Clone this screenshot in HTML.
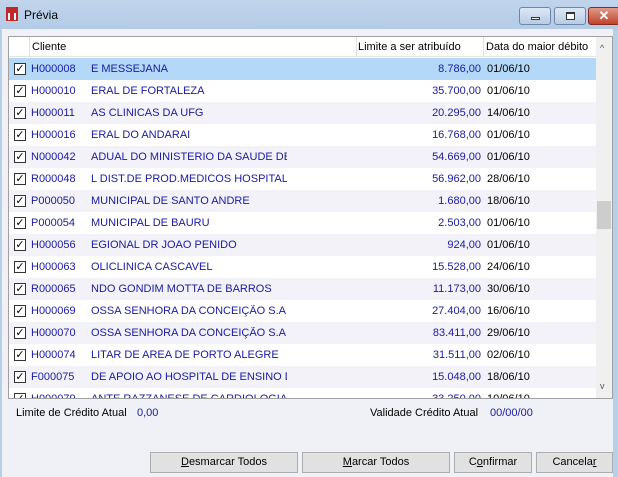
<!DOCTYPE html>
<html><head><style>
*{margin:0;padding:0;box-sizing:border-box}
body{width:618px;height:477px;overflow:hidden;font-family:"Liberation Sans",sans-serif;font-size:11px;background:#f0f0f7;position:relative}
.title{position:absolute;left:0;top:0;width:618px;height:29px;background:linear-gradient(#c0d4ec,#b4cbe6)}
.lb{position:absolute;left:0;top:29px;width:2px;height:448px;background:#b8cfea}
.rb{position:absolute;right:0;top:29px;width:5px;height:448px;background:#b8cfea}
.tb{position:absolute;top:7px;height:18px;border:1px solid #6e87a8;border-radius:3px;background:linear-gradient(#dce8f6,#b8cce4)}
.grid{position:absolute;left:8px;top:36px;width:605px;height:363px;border:1px solid #a0a0a0;background:#fff;overflow:hidden}
.hdr{position:absolute;left:0;top:0;width:587px;height:20px;background:#fff;border-bottom:1px solid #e4e4e4}
.hdr span{position:absolute;top:4px;color:#000}
.hsep{position:absolute;top:0;width:1px;height:20px;background:#e0e0e0}
.row{position:absolute;left:0;width:587px;height:22px}
.row span{position:absolute;top:5px;color:#1a1aa0;white-space:nowrap}
.cb{position:absolute;left:5px;top:5px;width:12px;height:12px;border:1px solid #333;background:#fff;font-size:11px;line-height:10px;text-align:center;color:#000}
.sb{position:absolute;left:587px;top:0;width:16px;height:361px;background:#f0f0f0}
.btn{position:absolute;top:452px;height:21px;border:1px solid #adadad;background:#e1e1e1;text-align:center;line-height:19px;font-size:11px;color:#000}
</style></head><body>
<div class="title"></div>
<div style="position:absolute;left:6px;top:7px;width:12px;height:14px;background:#c0282a"></div>
<div style="position:absolute;left:8px;top:13px;width:8px;height:7px;border-left:2px solid #fff;border-right:2px solid #fff"></div>
<div style="position:absolute;left:24px;top:8px;font-size:12px;color:#000">Prévia</div>
<div class="tb" style="left:519px;width:32px"><div style="position:absolute;left:11px;top:9px;width:9px;height:3px;border:1px solid #333;background:#fff"></div></div>
<div class="tb" style="left:554px;width:32px"><div style="position:absolute;left:11px;top:4px;width:9px;height:8px;border:1px solid #333;border-top-width:2px;background:#fff"></div></div>
<div class="tb" style="left:588px;width:32px;background:linear-gradient(#e09a88,#c0442c);border-color:#8a2a1c;color:#fff;font-weight:bold;font-size:13px;text-align:center;line-height:15px">✕</div>
<div class="lb"></div><div class="rb"></div>
<div class="grid">
<div class="hdr"><span style="left:23px">Cliente</span><span style="left:349px">Limite a ser atribuído</span><span style="left:477px">Data do maior débito</span>
<div class="hsep" style="left:20px"></div><div class="hsep" style="left:347px"></div><div class="hsep" style="left:474px"></div></div>
<div id="rows"></div>
<div class="sb"><div style="position:absolute;left:4px;top:6px;font-size:9px;color:#555">^</div>
<div style="position:absolute;left:1px;top:164px;width:14px;height:28px;background:#cdcdcd"></div>
<div style="position:absolute;left:4px;top:344px;font-size:9px;color:#555">v</div></div>
</div>
<div style="position:absolute;left:16px;top:407px;color:#000">Limite de Crédito Atual</div>
<div style="position:absolute;left:137px;top:407px;color:#1a1aa0">0,00</div>
<div style="position:absolute;left:370px;top:407px;color:#000">Validade Crédito Atual</div>
<div style="position:absolute;left:490px;top:407px;color:#1a1aa0">00/00/00</div>
<div class="btn" style="left:150px;width:148px"><u>D</u>esmarcar Todos</div>
<div class="btn" style="left:302px;width:148px"><u>M</u>arcar Todos</div>
<div class="btn" style="left:454px;width:78px">C<u>o</u>nfirmar</div>
<div class="btn" style="left:536px;width:77px">Cancela<u>r</u></div>
<script>
var d=[["H000008","E MESSEJANA","8.786,00","01/06/10"],["H000010","ERAL DE FORTALEZA","35.700,00","01/06/10"],["H000011","AS CLINICAS DA UFG","20.295,00","14/06/10"],["H000016","ERAL DO ANDARAI","16.768,00","01/06/10"],["N000042","ADUAL DO MINISTERIO DA SAUDE DE SC","54.669,00","01/06/10"],["R000048","L DIST.DE PROD.MEDICOS HOSPITALAR","56.962,00","28/06/10"],["P000050"," MUNICIPAL DE SANTO ANDRE","1.680,00","18/06/10"],["P000054"," MUNICIPAL DE BAURU","2.503,00","01/06/10"],["H000056","EGIONAL DR JOAO PENIDO","924,00","01/06/10"],["H000063","OLICLINICA CASCAVEL","15.528,00","24/06/10"],["R000065","NDO GONDIM MOTTA DE BARROS","11.173,00","30/06/10"],["H000069","OSSA SENHORA DA CONCEIÇÃO S.A","27.404,00","16/06/10"],["H000070","OSSA SENHORA DA CONCEIÇÃO S.A","83.411,00","29/06/10"],["H000074","LITAR DE AREA DE PORTO ALEGRE","31.511,00","02/06/10"],["F000075","DE APOIO AO HOSPITAL DE ENSINO DE F","15.048,00","18/06/10"],["H000079","ANTE RAZZANESE DE CARDIOLOGIA","33.250,00","10/06/10"]];
var h="";d.forEach(function(r,i){var bg=i==0?"#b4d8f8":(i%2?"#fff":"#f2f2f8");
h+='<div class="row" style="top:'+(21+i*22)+'px;background:'+bg+'"><div class="cb">✓</div><span style="left:22px">'+r[0]+'</span><span style="left:82px;width:196px;overflow:hidden">'+r[1]+'</span><span style="right:115px">'+r[2]+'</span><span style="left:478px;color:#000">'+r[3]+'</span></div>';});
document.getElementById("rows").innerHTML=h;
</script>
</body></html>
